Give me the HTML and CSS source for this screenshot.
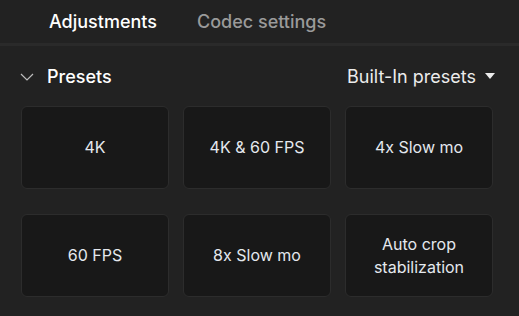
FILE: index.html
```html
<!DOCTYPE html>
<html>
<head>
<meta charset="utf-8">
<link rel="stylesheet" href="styles.css">
</head>
<body>
<div class="tabs">
  <div class="tab active">Adjustments</div>
  <div class="tab">Codec settings</div>
</div>
<div class="section-head">
  <div class="title">
    <svg class="chev" width="14" height="8" viewBox="0 0 14 8"><path d="M1 1 L7 7 L13 1" fill="none" stroke="#bdbdbd" stroke-width="1.2"/></svg>
    <span>Presets</span>
  </div>
  <div class="picker">
    <span>Built-In presets</span>
    <svg width="10" height="6" viewBox="0 0 10 6"><path d="M0 0 H10 L5 6 Z" fill="#ececec"/></svg>
  </div>
</div>
<div class="grid">
  <div class="card">4K</div>
  <div class="card">4K &amp; 60 FPS</div>
  <div class="card">4x Slow mo</div>
  <div class="card">60 FPS</div>
  <div class="card">8x Slow mo</div>
  <div class="card">Auto crop<br>stabilization</div>
</div>
</body>
</html>
```
FILE: styles.css
```css
html, body {
  margin: 0;
  padding: 0;
  background: #222222;
  font-family: Inter, "Noto Sans", sans-serif;
  width: 519px;
  height: 316px;
  overflow: hidden;
}
.tabs {
  display: flex;
  align-items: center;
  height: 43px;
  padding-left: 49px;
  gap: 40px;
  border-bottom: 3px solid #2a2a2a;
}
.tab {
  font-size: 18px;
  font-weight: 500;
  color: #9a9a9a;
}
.tab.active {
  color: #ffffff;
  font-weight: 500;
}
.section-head {
  display: flex;
  align-items: center;
  justify-content: space-between;
  height: 28px;
  padding: 16px 25px 0 20px;
  margin-bottom: 16px;
}
.title {
  display: flex;
  align-items: center;
  gap: 13px;
  font-size: 18px;
  font-weight: 500;
  color: #ffffff;
}
.chev {
  margin-top: 1px;
}
.picker {
  display: flex;
  align-items: center;
  gap: 9px;
  font-size: 18px;
  color: #ececec;
  margin-right: -1px;
}
.grid {
  display: grid;
  grid-template-columns: repeat(3, 148px);
  grid-auto-rows: 83px;
  column-gap: 14px;
  row-gap: 25px;
  padding-left: 21px;
}
.card {
  box-sizing: border-box;
  background: #181818;
  border: 1px solid #2c2c2c;
  border-radius: 6px;
  display: flex;
  align-items: center;
  justify-content: center;
  text-align: center;
  font-size: 16px;
  line-height: 23px;
  color: #e4e8ee;
}
```
